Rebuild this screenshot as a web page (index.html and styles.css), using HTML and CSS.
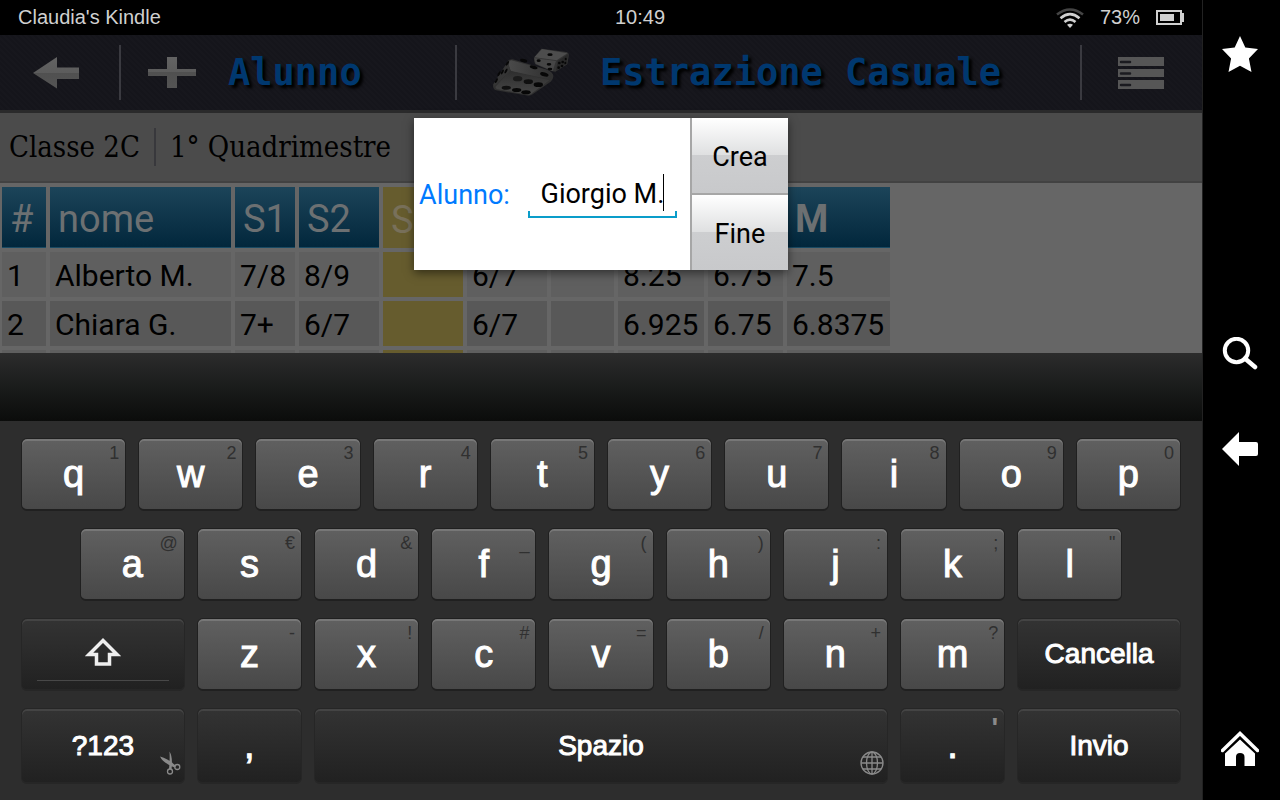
FILE: index.html
```html
<!DOCTYPE html>
<html lang="it">
<head>
    <meta charset="UTF-8">
    <meta name="viewport" content="width=device-width, initial-scale=1.0">
    <title>Registro - Classe 2C</title>
    <link rel="stylesheet" href="styles.css">
</head>
<body>
    <div class="device">
        <div class="screen">
            <!-- Status bar -->
            <div class="status-bar">
                <span>Claudia's Kindle</span>
                <span class="time">10:49</span>
                <div class="status-icons">
                    <svg width="28" height="20" viewBox="0 0 28 20" fill="none" stroke="#d0d0d0" stroke-width="2.6">
                        <path d="M1 6.500Q14 -3.500 27 6.500" stroke="#444"/>
                        <path d="M4.500 10.200Q14 2.200 23.500 10.200"/>
                        <path d="M8.500 14Q14 9.200 19.500 14"/>
                        <path d="M14 20L11 16.800Q14 14.600 17 16.800Z" fill="#d0d0d0" stroke="none"/>
                    </svg>
                    <span>73%</span>
                    <svg width="28" height="15" viewBox="0 0 28 15">
                        <rect x="1" y="1" width="24" height="13" fill="none" stroke="#d0d0d0" stroke-width="2"/>
                        <rect x="4" y="4" width="14" height="7" fill="#d0d0d0"/>
                        <rect x="26" y="3" width="2" height="9" fill="#d0d0d0"/>
                    </svg>
                </div>
            </div>

            <div class="app">
                <header class="app-bar">
                    <button class="bar-button bar-back" aria-label="Indietro">
                        <svg width="48" height="32" viewBox="0 0 48 32">
                            <defs>
                                <linearGradient id="metal" x1="0" y1="0" x2="0" y2="1">
                                    <stop offset="0" stop-color="#636363"/>
                                    <stop offset=".5" stop-color="#5c5c5c"/>
                                    <stop offset=".5" stop-color="#505050"/>
                                    <stop offset="1" stop-color="#545454"/>
                                </linearGradient>
                            </defs>
                            <path d="M1 16L25 0V10.500H47V22H25V31.500Z" fill="url(#metal)"/>
                        </svg>
                    </button>
                    <button class="bar-button bar-add">
                        <svg width="48" height="32" viewBox="0 0 48 32">
                            <path d="M19 0H29V12H48V19H29V31H19V19H0V12H19Z" fill="url(#metal)"/>
                        </svg>
                        <span class="bar-title">Alunno</span>
                    </button>
                    <button class="bar-button bar-random">
                        <svg width="80" height="52" viewBox="12 12 240 156">
                            <defs>
                                <linearGradient id="dieTop" x1="0" y1="0" x2="1" y2="0">
                                    <stop offset="0" stop-color="#4a4a4a"/>
                                    <stop offset="1" stop-color="#2f2f2f"/>
                                </linearGradient>
                                <linearGradient id="dieFront" x1="0" y1="0" x2="0" y2="1">
                                    <stop offset="0" stop-color="#2e2e2e"/>
                                    <stop offset="1" stop-color="#464646"/>
                                </linearGradient>
                            </defs>
                            <!-- small die -->
                            <path d="M160 17L236 27Q244 30 242 40L238 64L202 86L190 84L142 64Q136 54 138 44Z" fill="#333"/>
                            <path d="M162 18L238 31L206 52L139 43Z" fill="#4d4d4d"/>
                            <path d="M139 45L204 54L194 84L143 62Z" fill="#464646"/>
                            <path d="M209 54L240 34L236 62L204 83Z" fill="#282828"/>
                            <!-- large die -->
                            <path d="M60 54Q64 48 74 49L178 80Q196 88 196 100Q196 110 188 116L134 154Q126 160 114 157L24 142Q14 138 15 126Z" fill="#303030"/>
                            <path d="M70 52L178 82Q194 90 190 110L70 84Q60 70 64 54Z" fill="url(#dieTop)"/>
                            <path d="M66 84L184 112L130 152Q124 156 114 154L26 138L22 132Z" fill="url(#dieFront)"/>
                            <path d="M60 56L66 84L20 130L16 124Z" fill="#353535"/>
                            <g fill="#070707">
                                <ellipse cx="107" cy="53" rx="11" ry="5" transform="rotate(14 107 53)"/>
                                <ellipse cx="137" cy="73" rx="12" ry="5" transform="rotate(14 137 73)"/>
                                <ellipse cx="169" cy="94" rx="13" ry="6" transform="rotate(16 169 94)"/>
                                <ellipse cx="89" cy="107" rx="14" ry="8" fill="#1b1b1b"/>
                                <ellipse cx="121" cy="116" rx="14" ry="7" fill="#0f0f0f"/>
                                <ellipse cx="151" cy="125" rx="14" ry="7"/>
                                <ellipse cx="55" cy="134" rx="14" ry="6" fill="#101010"/>
                                <ellipse cx="86" cy="141" rx="14" ry="6"/>
                                <ellipse cx="114" cy="148" rx="14" ry="6"/>
                                <ellipse cx="58" cy="61" rx="3" ry="8" transform="rotate(35 58 61)"/>
                                <ellipse cx="54" cy="84" rx="3" ry="8" transform="rotate(30 54 84)"/>
                                <ellipse cx="43" cy="87" rx="3" ry="8" transform="rotate(30 43 87)"/>
                                <ellipse cx="33" cy="92" rx="3" ry="8" transform="rotate(30 33 92)"/>
                                <ellipse cx="25" cy="113" rx="3" ry="8" transform="rotate(30 25 113)"/>
                                <ellipse cx="186" cy="35" rx="8" ry="4"/>
                                <ellipse cx="152" cy="53" rx="6" ry="4"/>
                                <ellipse cx="183" cy="64" rx="7" ry="4"/>
                                <ellipse cx="186" cy="78" rx="7" ry="4"/>
                                <ellipse cx="214" cy="60" rx="4" ry="4"/>
                                <ellipse cx="224" cy="57" rx="4" ry="4"/>
                                <ellipse cx="233" cy="48" rx="3" ry="4"/>
                                <ellipse cx="212" cy="74" rx="4" ry="4"/>
                                <ellipse cx="222" cy="69" rx="4" ry="4"/>
                                <ellipse cx="232" cy="60" rx="3" ry="4"/>
                            </g>
                        </svg>
                        <span class="bar-title">Estrazione Casuale</span>
                    </button>
                    <button class="bar-button bar-menu" aria-label="Menu">
                        <svg width="46" height="32" viewBox="0 0 46 32">
                            <path d="M0 0H46V9H0ZM0 12H46V20H0ZM0 23H46V32H0Z" fill="#565656"/>
                            <path d="M3 5H12M3 16.500H12M3 28H12" stroke="#1b1b20" stroke-width="2.500" stroke-linecap="round"/>
                        </svg>
                    </button>
                </header>

                <div class="class-bar">
                    <span>Classe 2C</span>
                    <span class="period">1° Quadrimestre</span>
                </div>

                <table class="grades">
                    <colgroup>
                        <col class="col-num"><col class="col-name"><col class="col-s1"><col class="col-mark"><col class="col-mark">
                        <col class="col-mark"><col class="col-empty"><col class="col-avg"><col class="col-avg2"><col class="col-total">
                    </colgroup>
                    <thead>
                        <tr><th>#</th><th>nome</th><th>S1</th><th>S2</th><th class="selected">S</th><th></th><th></th><th></th><th></th><th class="total">M</th></tr>
                    </thead>
                    <tbody>
                        <tr><td>1</td><td>Alberto M.</td><td>7/8</td><td>8/9</td><td class="selected"></td><td>6/7</td><td></td><td>8.25</td><td>6.75</td><td>7.5</td></tr>
                        <tr><td>2</td><td>Chiara G.</td><td>7+</td><td>6/7</td><td class="selected"></td><td>6/7</td><td></td><td>6.925</td><td>6.75</td><td>6.8375</td></tr>
                        <tr><td></td><td></td><td></td><td></td><td class="selected"></td><td></td><td></td><td></td><td></td><td></td></tr>
                    </tbody>
                </table>

                <!-- New student dialog -->
                <div class="overlay">
                    <form class="dialog" onsubmit="return false">
                        <div class="dialog-body">
                            <label for="student">Alunno:</label>
                            <div class="field">
                                <input type="text" id="student" value="Giorgio M." autocomplete="off" spellcheck="false">
                                <span class="caret"></span>
                            </div>
                        </div>
                        <div class="dialog-buttons">
                            <button type="submit">Crea</button>
                            <button type="button">Fine</button>
                        </div>
                    </form>
                </div>
            </div>

            <div class="suggestions"></div>

            <!-- Keyboard -->
            <div class="keyboard">
                <button class="key">q<small>1</small></button>
                <button class="key">w<small>2</small></button>
                <button class="key">e<small>3</small></button>
                <button class="key">r<small>4</small></button>
                <button class="key">t<small>5</small></button>
                <button class="key">y<small>6</small></button>
                <button class="key">u<small>7</small></button>
                <button class="key">i<small>8</small></button>
                <button class="key">o<small>9</small></button>
                <button class="key">p<small>0</small></button>

                <button class="key key-indent">a<small>@</small></button>
                <button class="key">s<small>€</small></button>
                <button class="key">d<small>&amp;</small></button>
                <button class="key">f<small>_</small></button>
                <button class="key">g<small>(</small></button>
                <button class="key">h<small>)</small></button>
                <button class="key">j<small>:</small></button>
                <button class="key">k<small>;</small></button>
                <button class="key">l<small>"</small></button>

                <button class="key dark wide key-shift" aria-label="Maiuscole">
                    <svg width="36" height="29" viewBox="0 0 36 29" fill="none" stroke="#eee" stroke-width="3.500">
                        <path d="M18 2.500L4 16.500H11.500V26H24.500V16.500H32Z"/>
                    </svg>
                </button>
                <button class="key">z<small>-</small></button>
                <button class="key">x<small>!</small></button>
                <button class="key">c<small>#</small></button>
                <button class="key">v<small>=</small></button>
                <button class="key">b<small>/</small></button>
                <button class="key">n<small>+</small></button>
                <button class="key">m<small>?</small></button>
                <button class="key dark wide">Cancella</button>

                <button class="key dark wide">?123
                    <svg class="key-icon" width="22" height="24" viewBox="0 0 22 24">
                        <path d="M10.500 0.500Q14 6 12.500 18L10 18Q11 8 10.500 0.500ZM1 5.500Q10 8 17 15L15.500 16.500Q4 12 1 5.500Z" fill="#8a8a8a"/>
                        <circle cx="11" cy="20.500" r="2.500" fill="none" stroke="#8a8a8a" stroke-width="1.300"/>
                        <circle cx="18.300" cy="16" r="2.500" fill="none" stroke="#8a8a8a" stroke-width="1.300"/>
                    </svg>
                </button>
                <button class="key dark">,</button>
                <button class="key dark space">Spazio
                    <svg class="key-icon" width="24" height="24" viewBox="0 0 24 24" fill="none" stroke="#8a8a8a" stroke-width="1.300">
                        <circle cx="12" cy="12" r="11"/>
                        <ellipse cx="12" cy="12" rx="5.500" ry="11"/>
                        <path d="M12 1V23M1 12H23M3 6H21M3 18H21"/>
                    </svg>
                </button>
                <button class="key dark">.<small>'</small></button>
                <button class="key dark wide">Invio</button>
            </div>
        </div>

        <!-- System buttons -->
        <nav class="sidebar">
            <button aria-label="Preferiti">
                <svg width="36" height="36" viewBox="0 0 36 36">
                    <path d="M18 0L23.300 11.500L36 13L26.900 22.500L29.500 36L18 29.700L6.500 36L9.100 22.500L0 13L12.700 11.500Z" fill="#fff"/>
                </svg>
            </button>
            <div class="sidebar-group">
                <button aria-label="Cerca">
                    <svg width="36" height="34" viewBox="0 1 36 34" fill="none" stroke="#fff" stroke-width="4">
                        <circle cx="14.500" cy="14.500" r="11.700"/>
                        <path d="M23 22.500L33 31" stroke-width="4.500" stroke-linecap="round"/>
                    </svg>
                </button>
                <button aria-label="Indietro">
                    <svg width="36" height="34" viewBox="0 0 36 34">
                        <path d="M0 17L17 0V10H34Q36 10 36 12V22Q36 24 34 24H17V34Z" fill="#fff"/>
                    </svg>
                </button>
            </div>
            <button aria-label="Home">
                <svg width="38" height="36" viewBox="0 0 38 36">
                    <path d="M1.500 19.500L19 2.500L36.500 19.500" fill="none" stroke="#fff" stroke-width="3.500" stroke-linecap="round"/>
                    <path d="M19 8.500L34 22.500V35H23.500V26Q23.500 22 19 22Q15 22 15 26V35H4V22.500Z" fill="#fff"/>
                </svg>
            </button>
        </nav>
    </div>
</body>
</html>
```
FILE: styles.css
```css
* {
    box-sizing: border-box;
}

body {
    margin: 0;
    background-color: #000;
    font-family: Roboto, "Liberation Sans", sans-serif;
}

button {
    margin: 0;
    padding: 0;
    border: none;
    background: none;
    font-family: inherit;
    cursor: pointer;
}

svg {
    display: block;
}

.device {
    display: flex;
    height: 100vh;
}

.screen {
    flex: 1;
    min-width: 0;
    display: flex;
    flex-direction: column;
}

/* Status bar */
.status-bar {
    display: grid;
    grid-template-columns: 1fr auto 1fr;
    align-items: center;
    height: 35px;
    padding: 0 18px;
    color: #d0d0d0;
    font-family: "Liberation Sans", Arial, sans-serif;
    font-size: 20px;
}

/* the clock is centred on the whole device, sidebar included */
.time {
    padding-left: 78px;
}

.status-icons {
    display: flex;
    justify-content: flex-end;
    align-items: center;
    gap: 16px;
}

/* App */
.app {
    flex: 1;
    min-height: 0;
    position: relative;
    overflow: hidden;
    background-color: #666;
}

.app-bar {
    display: flex;
    align-items: center;
    height: 78px;
    border-bottom: 3px solid #2a2a2b;
    background: repeating-linear-gradient(45deg, #15151b 0, #15151b 2px, #17171d 2px, #17171d 4px);
}

.bar-button {
    display: flex;
    align-items: center;
    height: 55px;
    border-right: 2px solid #3a3a40;
}

.bar-back {
    width: 121px;
    padding-left: 32px;
}

.bar-add {
    width: 336px;
    padding-left: 27px;
    gap: 32px;
}

.bar-random {
    flex: 1;
    padding-left: 35px;
    gap: 28px;
}

.bar-menu {
    width: 120px;
    padding-left: 36px;
    border-right: none;
}

.bar-title {
    color: #00386f;
    font-family: "DejaVu Sans Mono", monospace;
    font-size: 37px;
    font-weight: 700;
    line-height: 48px;
    text-shadow: 3px 3px 3px #000;
    white-space: nowrap;
}

.class-bar {
    display: flex;
    align-items: center;
    height: 70px;
    padding-left: 9px;
    border-bottom: 2px solid #424242;
    background-color: #4b4b4b;
    color: #000;
    font-family: "DejaVu Serif Condensed", "DejaVu Serif", serif;
    font-size: 29px;
    font-stretch: condensed;
    line-height: 38px;
}

.period {
    margin-left: 14px;
    padding-left: 14px;
    border-left: 2px solid #38383c;
}

/* Grades */
.grades {
    width: 892px;
    margin-left: -2px;
    table-layout: fixed;
    border-collapse: separate;
    border-spacing: 4px;
    font-size: 30px;
}

.col-num { width: 44px; }
.col-name { width: 181px; }
.col-s1 { width: 60px; }
.col-mark { width: 80px; }
.col-empty { width: 63px; }
.col-avg { width: 86px; }
.col-avg2 { width: 75px; }
.col-total { width: 103px; }

.grades th {
    height: 61px;
    padding: 4px 8px 0;
    border-bottom: 1px solid #194a63;
    background: linear-gradient(#1c4459, #02273c);
    color: #6c7072;
    font-size: 38px;
    font-weight: 400;
    text-align: left;
}

.grades .total {
    font-weight: 700;
}

.grades td {
    height: 45px;
    padding: 2px 0 0 5px;
    background-color: #5f5f5f;
    color: #000;
}

.grades tr:nth-child(even) td {
    background-color: #585858;
}

.grades .selected,
.grades tr:nth-child(even) .selected {
    border-bottom: none;
    background: #665c2e;
    color: #78705a;
}

/* Dialog */
.overlay {
    position: absolute;
    inset: 0;
    display: flex;
    align-items: center;
    justify-content: center;
}

.dialog {
    display: flex;
    background-color: #fff;
    box-shadow: 0 3px 9px rgba(0, 0, 0, 0.5);
    font-size: 27px;
}

.dialog-body {
    display: flex;
    align-items: center;
    gap: 18px;
    padding: 0 13px 0 5px;
}

.dialog label {
    padding-top: 2px;
    color: #007aff;
}

.field {
    position: relative;
}

.field input {
    display: block;
    width: 149px;
    height: 48px;
    padding: 0;
    border: none;
    outline: none;
    background:
        linear-gradient(#0a9dca, #0a9dca) left bottom / 2px 7px no-repeat,
        linear-gradient(#0a9dca, #0a9dca) right bottom / 2px 7px no-repeat,
        linear-gradient(#0a9dca, #0a9dca) left bottom / 100% 2px no-repeat;
    color: #000;
    font-family: inherit;
    font-size: 27px;
    text-align: center;
}

.caret {
    position: absolute;
    top: 4px;
    right: 13px;
    width: 1px;
    height: 37px;
    background-color: #000;
}

.dialog-buttons {
    display: flex;
    flex-direction: column;
    gap: 2px;
    padding-left: 2px;
    background-color: #a6a6a6;
}

.dialog-buttons button {
    width: 96px;
    height: 75px;
    padding-top: 2px;
    background: linear-gradient(#fff, #dfe0e1 49%, #cdced0 50%, #c8c9cb);
    color: #000;
    font-size: 27px;
}

/* Keyboard */
.suggestions {
    height: 68px;
    background: linear-gradient(#2c2c2c, #1a1c1b 50%, #0b0c0b);
}

.keyboard {
    display: grid;
    grid-template-columns: repeat(20, 1fr);
    grid-template-rows: 73px 73px 73px 76px;
    gap: 17px 12px;
    padding: 17px 21px 16px;
    background-color: #2d2d2d;
}

.key {
    grid-column: span 2;
    position: relative;
    border: 1px solid #202020;
    border-bottom-width: 2px;
    border-radius: 6px;
    background: linear-gradient(#606060, #484848);
    box-shadow: inset 0 2px #777;
    color: #fff;
    font-family: "Liberation Sans", Arial, sans-serif;
    font-size: 38px;
    -webkit-text-stroke: 1px #fff;
}

.key-indent {
    grid-column: 2 / span 2;
}

.key small {
    position: absolute;
    top: 5px;
    right: 6px;
    color: #303030;
    font-size: 18px;
    line-height: 18px;
    -webkit-text-stroke: 0;
}

.dark {
    border-color: #262626;
    background: linear-gradient(#333, #212121);
    box-shadow: inset 0 2px #444;
}

.key.dark small {
    color: #8a8a8a;
    font-weight: 700;
    font-size: 28px;
    line-height: 28px;
}

.wide {
    grid-column: span 3;
    font-size: 28px;
}

.space {
    grid-column: span 10;
    font-size: 28px;
}

/* row two leaves half a key free at the end */
.key-shift {
    grid-column: 1 / span 3;
    display: flex;
    flex-direction: column;
    align-items: center;
    padding: 19px 15px 0;
}

.key-shift::after {
    content: "";
    width: 100%;
    margin-top: 13px;
    border-top: 1px solid #484848;
}

.key-icon {
    position: absolute;
    right: 3px;
    bottom: 7px;
}

/* Sidebar */
.sidebar {
    display: flex;
    flex-direction: column;
    align-items: center;
    justify-content: space-between;
    width: 78px;
    padding: 36px 3px 33px 0;
    border-left: 1px solid #222;
    background-color: #000;
}

.sidebar-group {
    display: flex;
    flex-direction: column;
    gap: 61px;
}
```
